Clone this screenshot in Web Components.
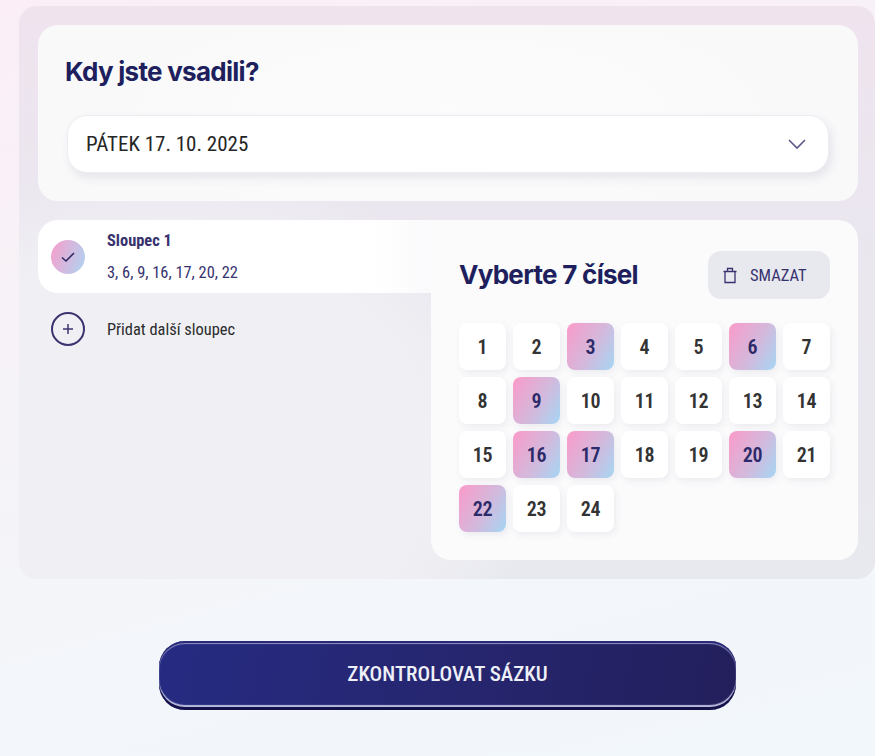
<!DOCTYPE html>
<html lang="cs">
<head>
<meta charset="utf-8">
<title>Kdy jste vsadili?</title>
<style>
    html, body { margin: 0; height: 100%; overflow: hidden; }
    body {
        width: 875px;
        height: 756px;
        background: linear-gradient(165deg, #fbeef6 0%, #f7f2f7 30%, #f3f6fa 70%, #f2f7fc 100%);
        font-family: Roboto, "Liberation Sans", sans-serif;
    }
</style>
</head>
<body>
<bet-page>
    <bet-panel>
        <date-card heading="Kdy jste vsadili?" value="PÁTEK 17. 10. 2025"></date-card>
        <bet-split>
            <column-list slot="left"></column-list>
            <number-picker slot="right" selected="3,6,9,16,17,20,22"></number-picker>
        </bet-split>
    </bet-panel>
    <submit-button>ZKONTROLOVAT SÁZKU</submit-button>
</bet-page>

<script>
const NARROW = `font-family: Roboto, "Liberation Sans", sans-serif; font-stretch: 75%;`;
const HEADING = `font-family: Inter, "Liberation Sans", sans-serif; font-weight: 700; color: #201f5e;`;

class BetPage extends HTMLElement {
    constructor() {
        super();
        this.attachShadow({ mode: 'open' });
        this.shadowRoot.innerHTML = `
            <style>
                :host { display: flex; flex-direction: column; align-items: flex-start; padding: 6px 0 0 19px; }
            </style>
            <slot></slot>
        `;
    }
}

class BetPanel extends HTMLElement {
    constructor() {
        super();
        this.attachShadow({ mode: 'open' });
        this.shadowRoot.innerHTML = `
            <style>
                :host {
                    display: flex;
                    flex-direction: column;
                    gap: 19px;
                    box-sizing: border-box;
                    width: 856px;
                    height: 573px;
                    padding: 19px 17px 19px 19px;
                    border-radius: 18px;
                    background:
                        radial-gradient(ellipse 374px 300px at 150px 450px, #f0f0f4 70%, rgba(240, 240, 244, 0) 100%),
                        linear-gradient(180deg, #efe3ee 0%, #ebe6ef 30%, #e8e9ef 100%);
                }
            </style>
            <slot></slot>
        `;
    }
}

class DateCard extends HTMLElement {
    constructor() {
        super();
        this.attachShadow({ mode: 'open' });
        this.shadowRoot.innerHTML = `
            <style>
                :host {
                    display: block;
                    box-sizing: border-box;
                    height: 176px;
                    padding: 31px 29px 0;
                    border-radius: 20px;
                    background:
                        radial-gradient(ellipse 340px 120px at 50% 90px, #fcfcfd 0%, rgba(252, 252, 253, 0) 100%),
                        #f9f9fa;
                }
                h2 { ${HEADING} margin: 0 0 0 -2px; font-size: 26px; line-height: 32px; letter-spacing: -0.72px; }
                .select {
                    display: flex;
                    align-items: center;
                    justify-content: space-between;
                    box-sizing: border-box;
                    height: 58px;
                    margin-top: 27px;
                    padding: 0 22px 0 18px;
                    border-radius: 20px;
                    background: #fff;
                    border: 1px solid #ececf3;
                    box-shadow: 3px 5px 10px rgba(60, 60, 110, .10);
                    ${NARROW}
                    font-size: 21px;
                    color: #252525;
                }
                svg { display: block; }
            </style>
            <h2></h2>
            <div class="select">
                <span></span>
                <svg width="18" height="12" viewBox="0 0 18 12" fill="none" stroke="#5b5886" stroke-width="1.6">
                    <path d="M1 2l8 8 8-8"/>
                </svg>
            </div>
        `;
    }

    connectedCallback() {
        this.shadowRoot.querySelector('h2').textContent = this.getAttribute('heading');
        this.shadowRoot.querySelector('.select span').textContent = this.getAttribute('value');
    }
}

class BetSplit extends HTMLElement {
    constructor() {
        super();
        this.attachShadow({ mode: 'open' });
        this.shadowRoot.innerHTML = `
            <style>
                :host { display: flex; height: 340px; }
                .left { flex: 0 0 393px; }
                .right { flex: 1; display: flex; }
            </style>
            <div class="left"><slot name="left"></slot></div>
            <div class="right"><slot name="right"></slot></div>
        `;
    }
}

class ColumnList extends HTMLElement {
    constructor() {
        super();
        this.attachShadow({ mode: 'open' });
        this.shadowRoot.innerHTML = `
            <style>
                :host { display: block; ${NARROW} }
                .row { display: flex; align-items: center; padding-left: 13px; gap: 22px; }
                .active {
                    height: 73px;
                    background: linear-gradient(90deg, #fff 0%, #fff 85%, #fafafc 100%);
                    border-radius: 20px 0 0 20px;
                }
                .dot {
                    flex: none;
                    box-sizing: border-box;
                    width: 34px;
                    height: 34px;
                    border-radius: 50%;
                    display: flex;
                    align-items: center;
                    justify-content: center;
                }
                .check { background: linear-gradient(110deg, #f99dca 0%, #add5f3 100%); }
                .plus { border: 2px solid #3b3470; }
                .text { display: flex; flex-direction: column; gap: 12px; }
                .title { font-size: 16.4px; font-weight: 700; line-height: 20px; color: #37326e; }
                .nums { font-size: 16.4px; line-height: 20px; color: #37326e; }
                .add { height: 34px; margin-top: 19px; font-size: 16.4px; color: #2b2b2b; }
                svg { display: block; }
            </style>
            <div class="row active">
                <span class="dot check">
                    <svg width="16" height="12" viewBox="0 0 16 12" fill="none" stroke="#2b2860" stroke-width="1.5"><path d="M2 6.5l4 3.5 8-8"/></svg>
                </span>
                <div class="text">
                    <span class="title">Sloupec 1</span>
                    <span class="nums">3, 6, 9, 16, 17, 20, 22</span>
                </div>
            </div>
            <div class="row add">
                <span class="dot plus">
                    <svg width="12" height="12" viewBox="0 0 12 12" fill="none" stroke="#3b3470" stroke-width="1.5"><path d="M6 1v10M1 6h10"/></svg>
                </span>
                <span>Přidat další sloupec</span>
            </div>
        `;
    }
}

class NumberCell extends HTMLElement {
    static get observedAttributes() {
        return ['value', 'selected'];
    }

    constructor() {
        super();
        this.attachShadow({ mode: 'open' });
        this.shadowRoot.innerHTML = `
            <style>
                :host {
                    display: flex;
                    align-items: center;
                    justify-content: center;
                    width: 47px;
                    height: 47px;
                    border-radius: 8px;
                    background: #fff;
                    box-shadow: 2px 3px 7px rgba(60, 60, 110, .08);
                    ${NARROW}
                    font-size: 20px;
                    font-weight: 600;
                    letter-spacing: -0.2px;
                    color: #333;
                }
                :host([selected]) {
                    background: linear-gradient(120deg, #fb9ac9 0%, #d3b9dc 55%, #a6d6f4 100%);
                    color: #2c2a68;
                }
            </style>
            <span></span>
        `;
    }

    attributeChangedCallback() {
        this.shadowRoot.querySelector('span').textContent = this.getAttribute('value');
    }
}

class NumberPicker extends HTMLElement {
    constructor() {
        super();
        this.attachShadow({ mode: 'open' });
        this.shadowRoot.innerHTML = `
            <style>
                :host {
                    display: block;
                    flex: 1;
                    box-sizing: border-box;
                    padding: 31px 28px 0;
                    background: #fbfbfc;
                    border-radius: 0 20px 20px 20px;
                }
                .head { display: flex; align-items: center; justify-content: space-between; height: 48px; }
                h2 { ${HEADING} margin: 0 0 1px; font-size: 26px; letter-spacing: -0.72px; }
                .clear {
                    display: flex;
                    align-items: center;
                    gap: 13px;
                    box-sizing: border-box;
                    width: 122px;
                    height: 48px;
                    padding-left: 15px;
                    border-radius: 13px;
                    background: #e8e8ef;
                    ${NARROW}
                    font-size: 16.5px;
                    color: #37326e;
                }
                .grid { display: grid; grid-template-columns: repeat(7, 47px); gap: 7px; margin-top: 24px; }
                svg { display: block; }
            </style>
            <div class="head">
                <h2>Vyberte 7 čísel</h2>
                <div class="clear">
                    <svg width="14" height="17" viewBox="0 0 14 17" fill="none" stroke="#37326e" stroke-width="1.3">
                        <path d="M2 4.5h10V15.5H2zM.5 4.5h13M4.5 4.5V1.5h5v3"/>
                    </svg>
                    <span>SMAZAT</span>
                </div>
            </div>
            <div class="grid"></div>
        `;
    }

    connectedCallback() {
        const selected = this.getAttribute('selected').split(',');
        const grid = this.shadowRoot.querySelector('.grid');
        for (let i = 1; i <= 24; i++) {
            const cell = document.createElement('number-cell');
            cell.setAttribute('value', i);
            if (selected.includes(String(i))) {
                cell.setAttribute('selected', '');
            }
            grid.appendChild(cell);
        }
    }
}

class SubmitButton extends HTMLElement {
    constructor() {
        super();
        this.attachShadow({ mode: 'open' });
        this.shadowRoot.innerHTML = `
            <style>
                :host {
                    display: flex;
                    align-items: center;
                    justify-content: center;
                    box-sizing: border-box;
                    width: 577px;
                    height: 69px;
                    margin: 62px 0 0 140px;
                    padding-bottom: 3px;
                    border-radius: 26px;
                    background: linear-gradient(100deg, #262b82 0%, #262670 50%, #231f5c 100%);
                    box-shadow: inset 0 2px 0 #2a2a78, inset 0 3px 1px #8f92c4,
                                inset 0 -3px 0 #14114a, inset 0 -5px 1px #b9bcdc;
                    ${NARROW}
                    font-size: 21px;
                    font-weight: 500;
                    color: #eef0f8;
                }
            </style>
            <slot></slot>
        `;
    }
}

customElements.define('bet-page', BetPage);
customElements.define('bet-panel', BetPanel);
customElements.define('date-card', DateCard);
customElements.define('bet-split', BetSplit);
customElements.define('column-list', ColumnList);
customElements.define('number-cell', NumberCell);
customElements.define('number-picker', NumberPicker);
customElements.define('submit-button', SubmitButton);
</script>
</body>
</html>
